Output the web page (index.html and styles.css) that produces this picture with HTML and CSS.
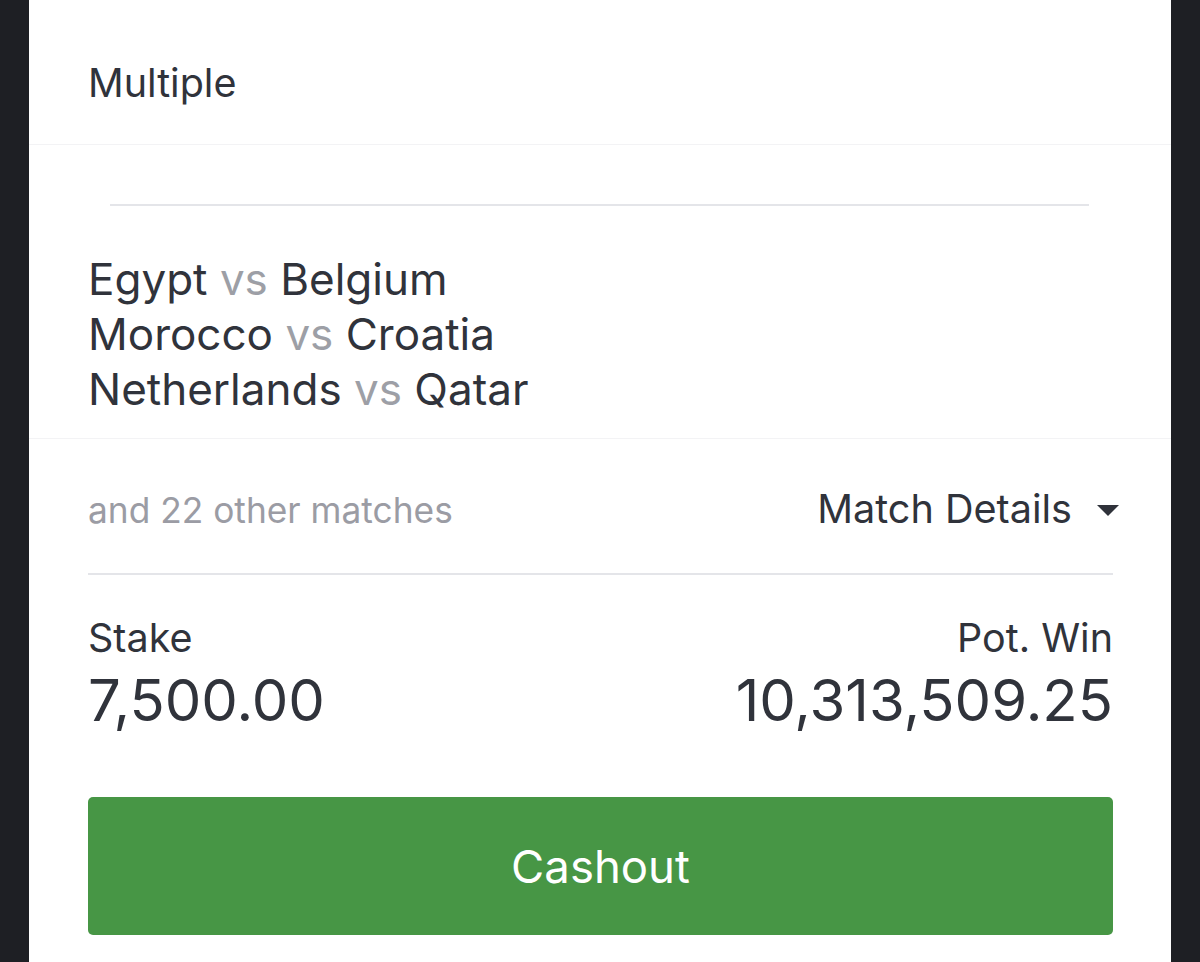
FILE: index.html
```html
<!DOCTYPE html>
<html>
<head>
<meta charset="utf-8">
<link rel="stylesheet" href="styles.css">
</head>
<body>
<div class="card">
  <div class="header"><span class="title">Multiple</span></div>
  <div class="matches">
    <div class="top-rule"></div>
    <div class="match-list">
      <div class="match">Egypt <span class="vs">vs</span> Belgium</div>
      <div class="match">Morocco <span class="vs">vs</span> Croatia</div>
      <div class="match">Netherlands <span class="vs">vs</span> Qatar</div>
    </div>
  </div>
  <div class="details">
    <div class="details-row">
      <span class="others">and 22 other matches</span>
      <span class="toggle">Match Details
        <svg class="caret" width="22" height="11" viewBox="0 0 22 11"><path d="M0 0 L22 0 L11 11 Z" fill="#2f323a"/></svg>
      </span>
    </div>
    <div class="amounts">
      <div class="amount-col">
        <div class="label">Stake</div>
        <div class="value">7,500.00</div>
      </div>
      <div class="amount-col right">
        <div class="label">Pot. Win</div>
        <div class="value">10,313,509.25</div>
      </div>
    </div>
    <button class="cashout">Cashout</button>
  </div>
</div>
</body>
</html>
```

FILE: styles.css
```css
html, body {
  margin: 0;
  padding: 0;
  background: #1e1f24;
  height: 962px;
  overflow: hidden;
}
.card {
  margin: 0 29px;
  background: #ffffff;
  height: 962px;
  font-family: Inter, "Noto Sans", sans-serif;
  color: #30333b;
}
.header {
  height: 145px;
  box-sizing: border-box;
  border-bottom: 1px solid #f3f3f5;
  padding-left: 59px;
  padding-top: 22px;
  display: flex;
  align-items: center;
}
.title {
  font-size: 39.5px;
}
.matches {
  height: 294px;
  box-sizing: border-box;
  border-bottom: 1px solid #f3f3f5;
  padding-top: 59px;
}
.top-rule {
  margin: 0 82px 0 81px;
  height: 2px;
  background: #e4e5e9;
}
.match-list {
  padding-left: 59px;
  padding-top: 46px;
}
.match {
  font-size: 44px;
  line-height: 55px;
}
.vs {
  color: #9d9fa6;
}
.details {
  padding: 0 58px 0 59px;
}
.details-row {
  height: 136px;
  box-sizing: border-box;
  padding-top: 46px;
  border-bottom: 2px solid #e4e5e9;
  display: flex;
  justify-content: space-between;
  align-items: baseline;
}
.others {
  font-size: 35.3px;
  color: #9b9ca4;
}
.toggle {
  font-size: 39.6px;
  display: flex;
  align-items: center;
  gap: 25px;
  margin-right: -6px;
}
.caret {
  display: block;
  margin-top: 2px;
}
.amounts {
  display: flex;
  justify-content: space-between;
  padding-top: 41px;
}
.amount-col.right {
  text-align: right;
}
.label {
  font-size: 39.5px;
  line-height: 44px;
}
.value {
  font-size: 58px;
  line-height: 70px;
  margin-top: 5px;
}
.cashout {
  display: block;
  width: 100%;
  margin-top: 62px;
  height: 138px;
  border: none;
  border-radius: 5px;
  background: #479645;
  color: #ffffff;
  font-family: Inter, "Noto Sans", sans-serif;
  font-size: 45.5px;
}
```
